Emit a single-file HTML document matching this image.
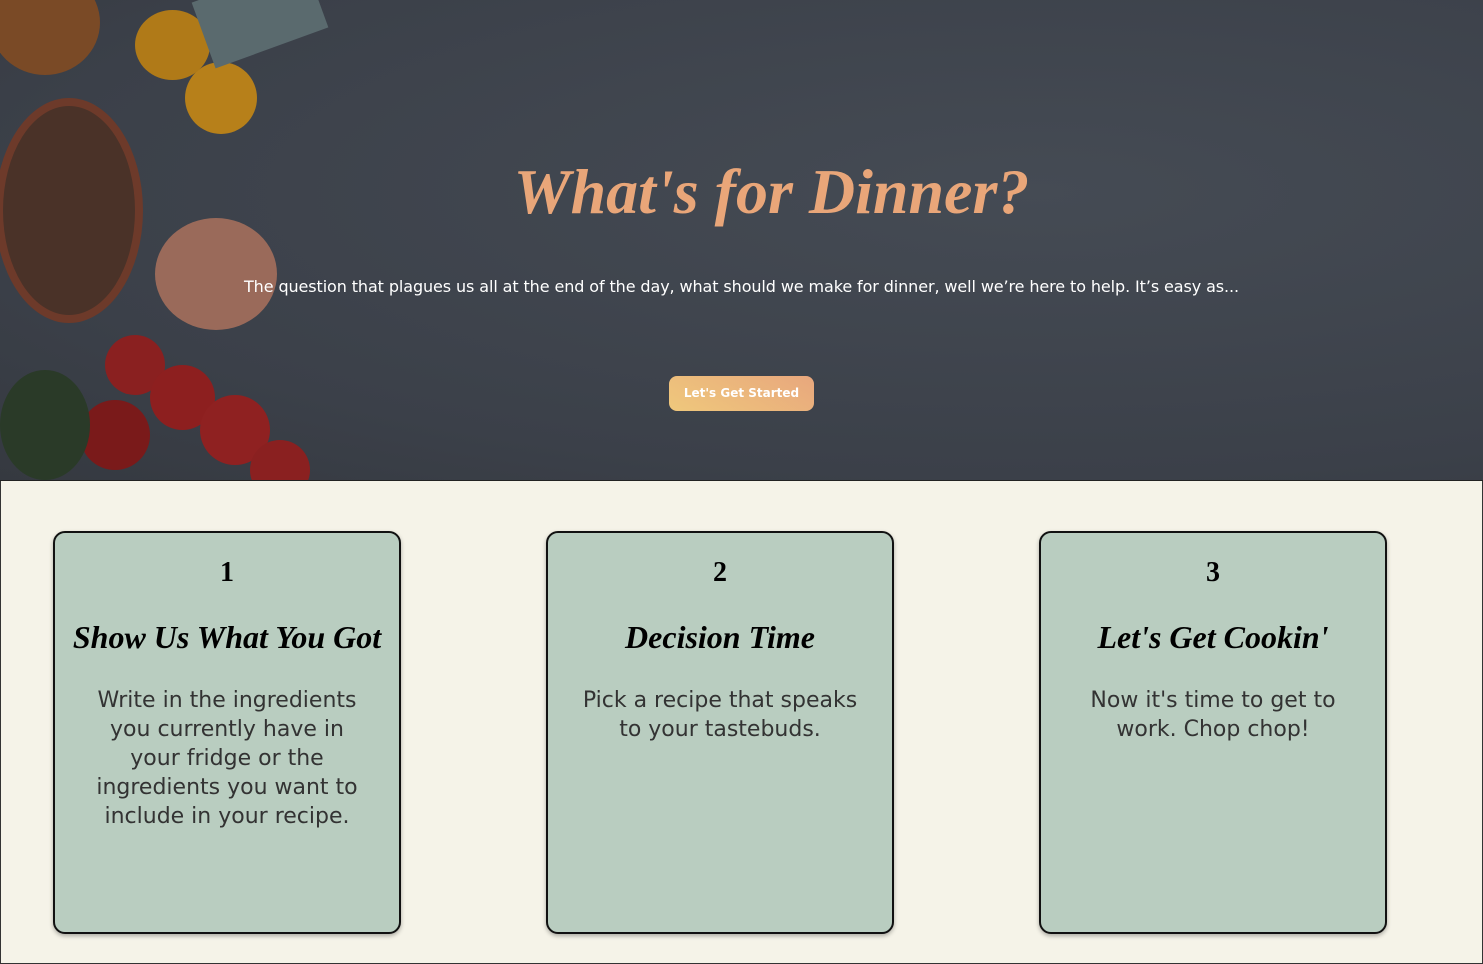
<!DOCTYPE html>
<html><head><style>
*{margin:0;padding:0;box-sizing:border-box}
body{width:1483px;height:964px;background:#f5f3e8;font-family:"Liberation Sans",sans-serif;overflow:hidden;position:relative;border:1px solid #333}
.hero{position:absolute;left:-1px;top:-1px;width:1483px;height:481px;background:radial-gradient(ellipse at 70% 40%,#454b54,#3b4049 70%,#353940);border-bottom:1px solid #222;overflow:hidden}
.b{position:absolute;border-radius:50%}
h1{position:absolute;top:155px;left:0;width:1483px;text-align:center;font:italic bold 64px "Liberation Serif",serif;color:#e9a679;margin-left:30px}
.sub{position:absolute;top:277px;left:0;width:1483px;text-align:center;color:#fff;font:16px "DejaVu Sans",sans-serif;letter-spacing:-0.1px}
.btn{position:absolute;left:669px;top:376px;width:145px;height:35px;border-radius:8px;background:linear-gradient(30deg,#efc87c,#e8a77d);color:#fff;font:bold 12px "DejaVu Sans",sans-serif;text-align:center;line-height:35px}
.card{position:absolute;top:530px;width:348px;height:403px;background:#b9cdc0;border:2px solid #111;border-radius:12px;text-align:center;box-shadow:0 2px 4px rgba(0,0,0,.3)}
.n{font:bold 28px "Liberation Serif",serif;margin-top:24px}
.t{font:italic bold 32px "Liberation Serif",serif;margin-top:30px}
.d{font:22px "DejaVu Sans",sans-serif;color:#333;margin:30px 28px 0;line-height:29px}
</style></head><body>
<div class="hero">
<div class="b" style="left:-10px;top:-30px;width:110px;height:105px;background:#7a4a26"></div>
<div class="b" style="left:135px;top:10px;width:75px;height:70px;background:#b07a18"></div>
<div class="b" style="left:185px;top:62px;width:72px;height:72px;background:#b7801a"></div>
<div class="b" style="left:-5px;top:98px;width:148px;height:225px;background:#4a3228;border:8px solid #6d3a2a"></div>
<div class="b" style="left:155px;top:218px;width:122px;height:112px;background:#9a6a5a"></div>
<div class="b" style="left:105px;top:335px;width:60px;height:60px;background:#8a2020"></div>
<div class="b" style="left:150px;top:365px;width:65px;height:65px;background:#8d1f1f"></div>
<div class="b" style="left:200px;top:395px;width:70px;height:70px;background:#8f2121"></div>
<div class="b" style="left:80px;top:400px;width:70px;height:70px;background:#7a1a1a"></div>
<div class="b" style="left:250px;top:440px;width:60px;height:60px;background:#8a2020"></div>
<div class="b" style="left:0;top:370px;width:90px;height:110px;background:#2a3a28"></div>
<div style="position:absolute;left:200px;top:-20px;width:120px;height:70px;background:#5a6a6e;transform:rotate(-20deg)"></div>
<h1>What's for Dinner?</h1>
<div class="sub">The question that plagues us all at the end of the day, what should we make for dinner, well we’re here to help. It’s easy as...</div>
<div class="btn">Let's Get Started</div>
</div>
<div class="card" style="left:52px"><div class="n">1</div><div class="t">Show Us What You Got</div><div class="d">Write in the ingredients you currently have in your fridge or the ingredients you want to include in your recipe.</div></div>
<div class="card" style="left:545px"><div class="n">2</div><div class="t">Decision Time</div><div class="d">Pick a recipe that speaks to your tastebuds.</div></div>
<div class="card" style="left:1038px"><div class="n">3</div><div class="t">Let's Get Cookin'</div><div class="d">Now it's time to get to work. Chop chop!</div></div>
</body></html>
